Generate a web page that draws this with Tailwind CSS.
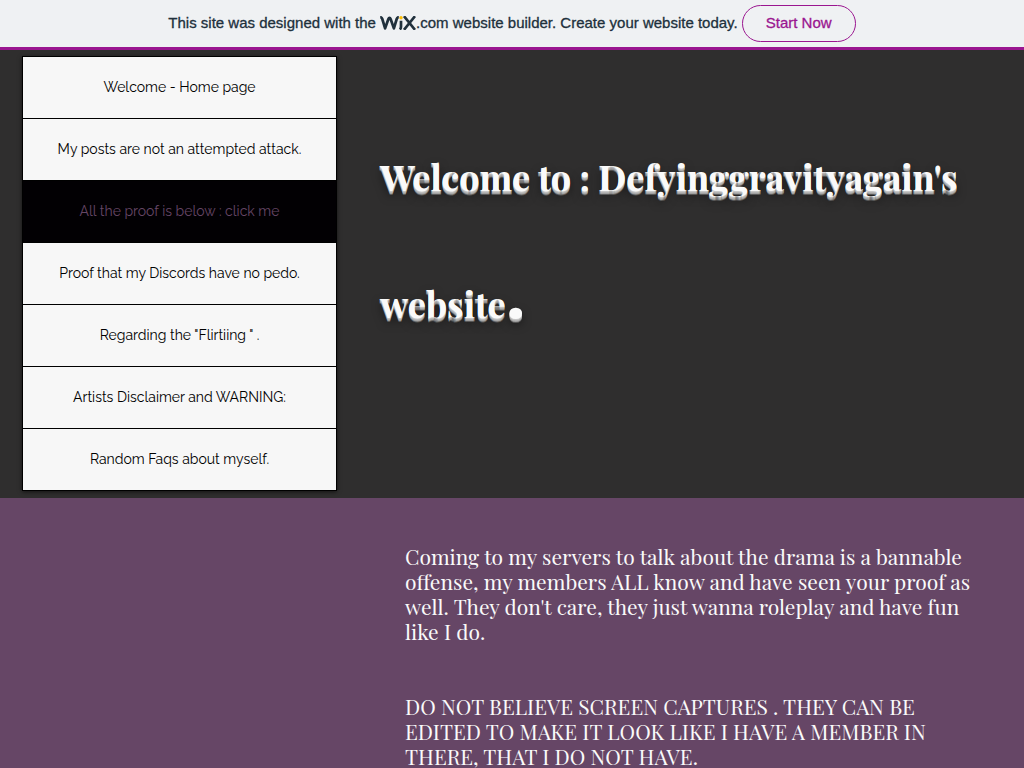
<!DOCTYPE html>
<html lang="en">
<head>
<meta charset="utf-8">
<meta name="viewport" content="width=device-width, initial-scale=1">
<title>Defyinggravityagain's website</title>
<script src="https://cdn.jsdelivr.net/npm/@tailwindcss/browser@4"></script>
</head>
<body class="flex h-screen flex-col overflow-hidden bg-[#664666]">
<aside class="flex h-[50px] shrink-0 items-center justify-center gap-1 border-b-3 border-[#9a1690] bg-[#eff1f3] font-['Liberation_Sans',Arial,sans-serif] text-[15px] text-[#20303c]">
  <p class="flex items-center whitespace-nowrap [-webkit-text-stroke:0.3px_#20303c]">
    <span class="whitespace-pre">This site was designed with the </span>
    <svg class="mb-[2px] h-[14px] w-[36px]" viewBox="0 0 36 14" role="img" aria-label="Wix">
      <g fill="none" stroke="#20303c" stroke-width="2.7" stroke-linejoin="round">
        <path d="M.2 1.200C1.500 1.200 1.900 1.700 2.300 3L5.100 12.400 8.300 3.300C8.600 2.400 8.900 1.900 9.500 1.900s.9.500 1.200 1.400l3.200 9.100L16.700 3c.4-1.300.8-1.800 2.100-1.800"/>
        <path d="M21 4.800v5.700c0 1.500-.2 2.200-1.200 3"/>
        <path d="M24 .2 35 13.800M35 .2 24 13.800"/>
      </g>
      <circle cx="21" cy="1.800" r="1.700" fill="#fbbd04"/>
    </svg>
    <span>.com website builder. Create your website today.</span>
  </p>
  <button class="h-[37px] w-[114px] rounded-full border border-[#9a1690] text-[#9a1690] [-webkit-text-stroke:0.3px_#9a1690]">Start Now</button>
</aside>
<header class="flex shrink-0 items-start gap-[43px] bg-[#2f2e2e] pt-[6px] pr-4 pb-[7px] pl-[22px]">
  <nav aria-label="Main" class="w-[315px] shrink-0 divide-y divide-black border border-black bg-[#f7f7f7] text-center font-[Raleway,Lato,sans-serif] text-[14px] text-black shadow-[0_1px_4px_rgba(0,0,0,0.6)]">
    <a href="#" class="block py-5 leading-[21px]">Welcome - Home page</a>
    <a href="#" class="block py-5 leading-[21px]">My posts are not an attempted attack.</a>
    <a href="#" aria-current="page" class="block bg-[#020003] py-5 leading-[21px] text-[#664666]">All the proof is below : click me</a>
    <a href="#" class="block py-5 leading-[21px]">Proof that my Discords have no pedo.</a>
    <a href="#" class="block py-5 leading-[21px]">Regarding the "Flirtiing " .</a>
    <a href="#" class="block py-5 leading-[21px]">Artists Disclaimer and WARNING:</a>
    <a href="#" class="block py-5 leading-[21px]">Random Faqs about myself.</a>
  </nav>
  <h1 class="pt-[57px] font-['Playfair_Display','Liberation_Serif',serif] text-[36px] leading-[127px] font-bold whitespace-nowrap text-[#fafafa] [text-shadow:0_1px_0_#c8c8c8,0_2px_0_#b4b4b4,0_3px_0_#a0a0a0,0_4px_0_rgba(140,140,140,0.5),0_5px_10px_rgba(0,0,0,0.5)]">Welcome to : Defyinggravityagain's<br>website<span class="text-[74px] leading-none">.</span></h1>
</header>
<main class="min-h-0 flex-1 pt-[46px] pr-10 pl-[405px] font-['Playfair_Display','Liberation_Serif',serif] text-[21px] leading-[25px] whitespace-nowrap text-[#fafafa]">
  <p>Coming to my servers to talk about the drama is a bannable<br>offense, my members ALL know and have seen your proof as<br>well. They don't care, they just wanna roleplay and have fun<br>like I do.</p>
  <p class="pt-[50px]">DO NOT BELIEVE SCREEN CAPTURES . THEY CAN BE<br>EDITED TO MAKE IT LOOK LIKE I HAVE A MEMBER IN<br>THERE, THAT I DO NOT HAVE.</p>
</main>
</body>
</html>
